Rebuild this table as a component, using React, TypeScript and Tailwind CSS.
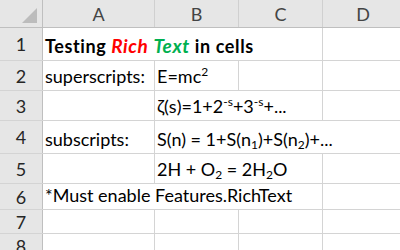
import React from "react";

const font = "font-['Lato','Liberation_Sans',sans-serif]";

function RowHead({ n }: { n: number }) {
  return (
    <div className="w-[43px] shrink-0 bg-[#e6e6e6] border-r border-[#bfbfbf] flex items-center justify-center text-[18px] text-[#262626] leading-none">
      {n}
    </div>
  );
}

function Cell({ w, children, border = true }: { w: string; children?: React.ReactNode; border?: boolean }) {
  return (
    <div className={`${w} shrink-0 flex items-end pl-[2px] pb-[5px] whitespace-nowrap text-[18px] leading-none text-black ${border ? "border-r border-[#d4d4d4]" : ""}`}>
      {children}
    </div>
  );
}

const Sup = ({ children }: { children: React.ReactNode }) => (
  <span className="text-[12px] relative top-[-7px]">{children}</span>
);
const Sub = ({ children }: { children: React.ReactNode }) => (
  <span className="text-[12px] relative top-[3px]">{children}</span>
);

export default function App() {
  return (
    <div className={`w-[400px] h-[250px] overflow-hidden bg-white ${font}`}>
      {/* header */}
      <div className="flex h-[28px] bg-[#e6e6e6] border-b border-[#bfbfbf] text-[18px] text-[#444] leading-none">
        <div className="w-[43px] shrink-0 border-r border-[#bfbfbf] relative">
          <svg className="absolute left-[22px] top-[8px]" width="15" height="15" viewBox="0 0 15 15">
            <polygon points="15,0 15,15 0,15" fill="#bcbcbc" />
          </svg>
        </div>
        <div className="w-[112px] shrink-0 border-r border-[#d0d0d0] flex items-center justify-center">A</div>
        <div className="w-[84px] shrink-0 border-r border-[#d0d0d0] flex items-center justify-center">B</div>
        <div className="w-[84px] shrink-0 border-r border-[#d0d0d0] flex items-center justify-center">C</div>
        <div className="w-[80px] shrink-0 flex items-center justify-center">D</div>
      </div>

      {/* row 1 */}
      <div className="flex h-[33px] border-b border-[#d4d4d4]">
        <RowHead n={1} />
        <Cell w="w-[280px]">
          <span className="font-bold tracking-[0.6px]">
            Testing <span className="italic text-[#ff0000] text-[19px]">Rich</span>{" "}
            <span className="italic text-[#00b050] text-[19px]">Text</span> in cells
          </span>
        </Cell>
        <Cell w="w-[80px]" border={false} />
      </div>

      {/* row 2 */}
      <div className="flex h-[30px] border-b border-[#d4d4d4]">
        <RowHead n={2} />
        <Cell w="w-[112px]">superscripts:</Cell>
        <Cell w="w-[84px]">
          <span>
            E=mc<Sup>2</Sup>
          </span>
        </Cell>
        <Cell w="w-[84px]" />
        <Cell w="w-[80px]" border={false} />
      </div>

      {/* row 3 */}
      <div className="flex h-[30px] border-b border-[#d4d4d4]">
        <RowHead n={3} />
        <Cell w="w-[112px]" />
        <Cell w="w-[168px]">
          <span>
            ζ(s)=1+2<Sup>-s</Sup>+3<Sup>-s</Sup>+...
          </span>
        </Cell>
        <Cell w="w-[80px]" border={false} />
      </div>

      {/* row 4 */}
      <div className="flex h-[33px] border-b border-[#d4d4d4]">
        <RowHead n={4} />
        <Cell w="w-[112px]">subscripts:</Cell>
        <Cell w="w-[248px]" border={false}>
          <span>
            S(n) = 1+S(n<Sub>1</Sub>)+S(n<Sub>2</Sub>)+...
          </span>
        </Cell>
      </div>

      {/* row 5 */}
      <div className="flex h-[30px] border-b border-[#d4d4d4]">
        <RowHead n={5} />
        <Cell w="w-[112px]" />
        <Cell w="w-[168px]">
          <span>
            2H + O<Sub>2</Sub> = 2H<Sub>2</Sub>O
          </span>
        </Cell>
        <Cell w="w-[80px]" border={false} />
      </div>

      {/* row 6 */}
      <div className="flex h-[26px] border-b border-[#d4d4d4]">
        <RowHead n={6} />
        <Cell w="w-[280px]">*Must enable Features.RichText</Cell>
        <Cell w="w-[80px]" border={false} />
      </div>

      {/* row 7 */}
      <div className="flex h-[24px] border-b border-[#d4d4d4]">
        <RowHead n={7} />
        <Cell w="w-[112px]" />
        <Cell w="w-[84px]" />
        <Cell w="w-[84px]" />
        <Cell w="w-[80px]" border={false} />
      </div>

      {/* row 8 */}
      <div className="flex h-[24px] border-b border-[#d4d4d4]">
        <RowHead n={8} />
        <Cell w="w-[112px]" />
        <Cell w="w-[84px]" />
        <Cell w="w-[84px]" />
        <Cell w="w-[80px]" border={false} />
      </div>
    </div>
  );
}
